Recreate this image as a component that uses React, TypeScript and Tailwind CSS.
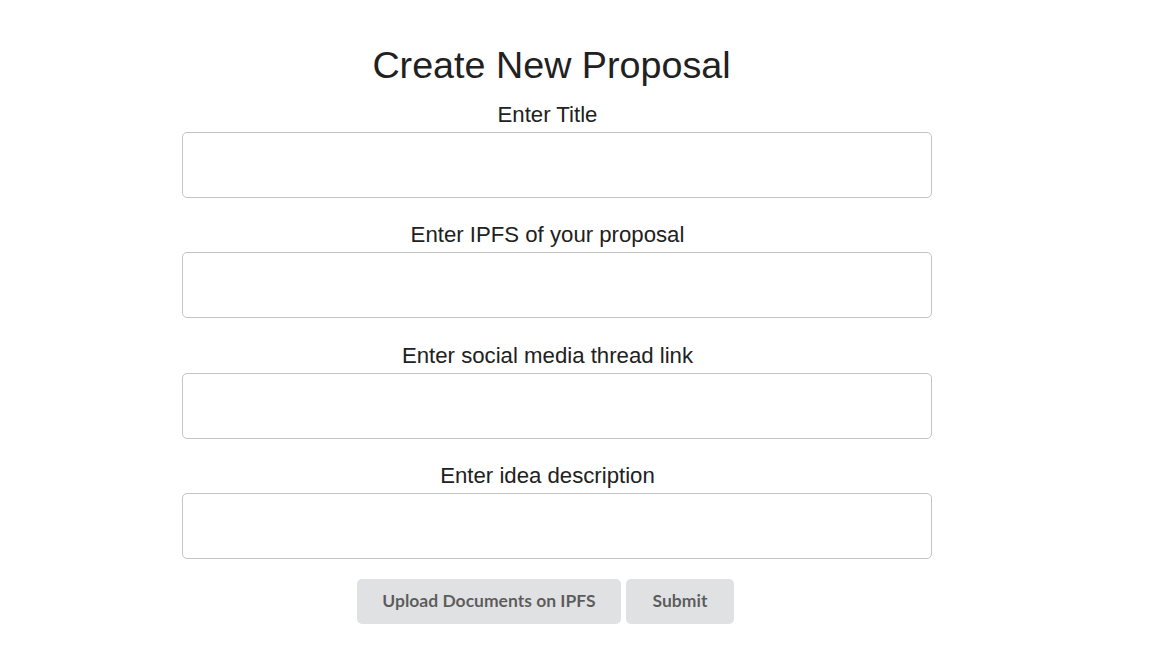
import React from "react";

const fields = [
  "Enter Title",
  "Enter IPFS of your proposal",
  "Enter social media thread link",
  "Enter idea description",
];

export default function App() {
  return (
    <div className="min-h-screen bg-white pt-[44px] font-['Liberation_Sans',Arial,sans-serif] text-[#212121]">
      <div className="ml-[182px] w-[731px] flex flex-col items-center">
        <h1 className="text-[37.7px] leading-[43px] translate-x-[4px]">Create New Proposal</h1>
        <form className="mt-[15px] w-full flex flex-col" onSubmit={(e) => e.preventDefault()}>
          {fields.map((label, i) => (
            <div
              key={label}
              className={i === fields.length - 1 ? "flex flex-col mb-[20px]" : "flex flex-col mb-[24.35px]"}
            >
              <label className="text-center text-[22.2px] leading-[25px]">{label}</label>
              <input
                type="text"
                className="mt-[5px] w-[750px] h-[66px] border border-[#c4c4c4] rounded-[5px] px-3 outline-none bg-white"
              />
            </div>
          ))}
          <div className="flex justify-center gap-[5px] pr-[4px]">
            <button
              type="button"
              className="w-[264px] h-[45px] rounded-[5px] bg-[#e0e1e2] text-[rgba(0,0,0,0.6)] font-['Lato',sans-serif] font-bold text-[17.5px]"
            >
              Upload Documents on IPFS
            </button>
            <button
              type="submit"
              className="w-[108px] h-[45px] rounded-[5px] bg-[#e0e1e2] text-[rgba(0,0,0,0.6)] font-['Lato',sans-serif] font-bold text-[17.5px]"
            >
              Submit
            </button>
          </div>
        </form>
      </div>
    </div>
  );
}
